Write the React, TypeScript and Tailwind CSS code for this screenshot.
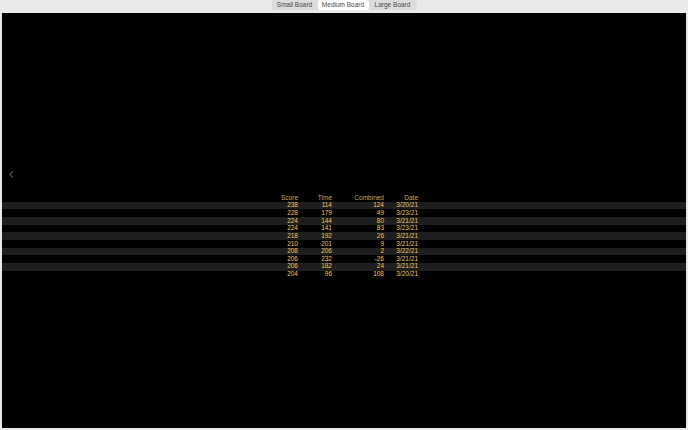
import React from "react";

const rows = [
  ["238", "114", "124", "3/20/21"],
  ["228", "179", "49", "3/23/21"],
  ["224", "144", "80", "3/21/21"],
  ["224", "141", "83", "3/23/21"],
  ["218", "192", "26", "3/21/21"],
  ["210", "201", "9", "3/21/21"],
  ["208", "206", "2", "3/22/21"],
  ["206", "232", "-26", "3/21/21"],
  ["206", "182", "24", "3/21/21"],
  ["204", "96", "108", "3/20/21"],
];

function Cells({ r, cls }: { r: string[]; cls: string }) {
  return (
    <div className={`flex h-[7.66px] items-center leading-none ${cls}`}>
      <span className="w-[296px] text-right">{r[0]}</span>
      <span className="w-[34px] text-right">{r[1]}</span>
      <span className="w-[52px] text-right">{r[2]}</span>
      <span className="w-[34px] text-right">{r[3]}</span>
    </div>
  );
}

export default function App() {
  return (
    <div className="h-[430px] w-[688px] overflow-hidden bg-[#e9e9e9] font-['Liberation_Sans',sans-serif] antialiased">
      <div className="flex h-[13px] items-start justify-center">
        <div className="flex h-[10px] items-center rounded-[3px] bg-[#dcdcdc] text-[6.5px] leading-none text-[#4a4a4a]">
          <span className="flex h-full w-[46px] items-center justify-center">Small Board</span>
          <span className="flex h-full w-[51px] items-center justify-center rounded-[2px] bg-white">Medium Board</span>
          <span className="flex h-full w-[48px] items-center justify-center">Large Board</span>
        </div>
      </div>
      <div className="relative mx-[2px] h-[415px] w-[684px] bg-black pt-[181px] text-[6.5px] text-[#eac66c]">
        <svg className="absolute left-[7px] top-[158px]" width="5" height="7" viewBox="0 0 5 7" fill="none" stroke="#8a8a8a" strokeWidth="1">
          <path d="M3.5 0.5 L1 3.5 L3.5 6.5" />
        </svg>
        <Cells r={["Score", "Time", "Combined", "Date"]} cls="text-[#c9a860]" />
        {rows.map((r, i) => (
          <Cells key={i} r={r} cls={i % 2 === 0 ? "bg-[#1e1e1e]" : ""} />
        ))}
      </div>
    </div>
  );
}
